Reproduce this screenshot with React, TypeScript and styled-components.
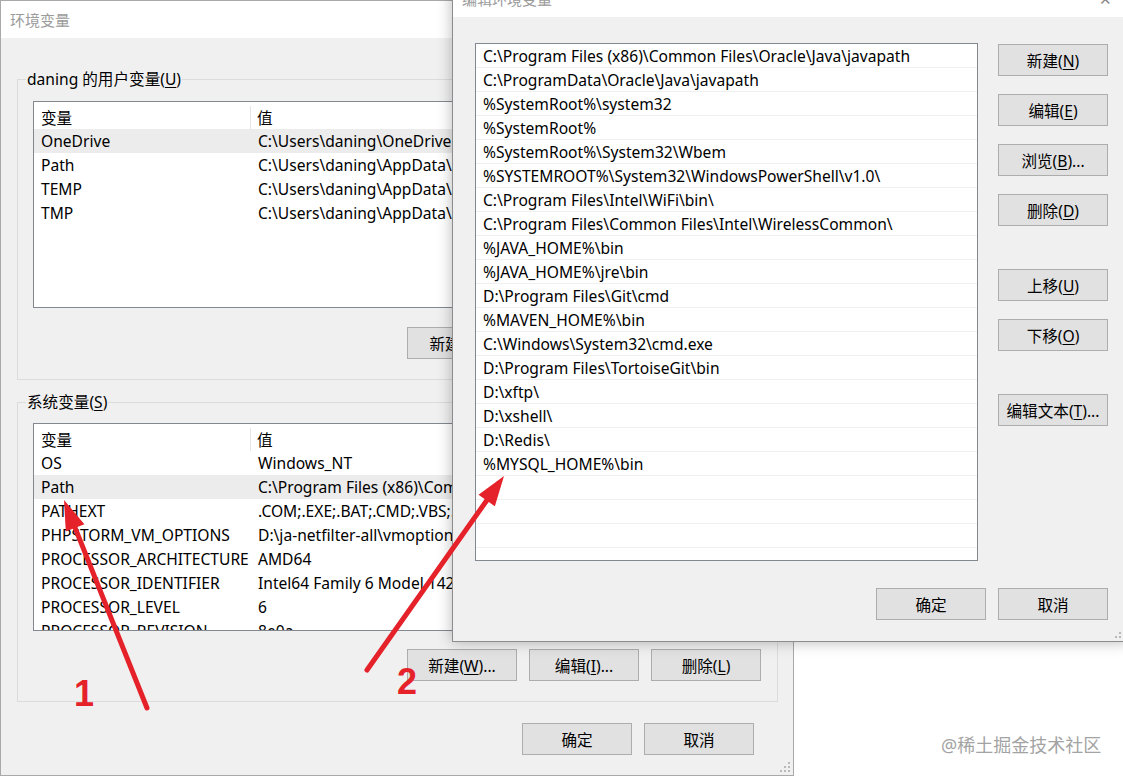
import React from 'react';
import styled, { createGlobalStyle } from 'styled-components';

const GlobalStyle = createGlobalStyle`
    html, body {
        margin: 0;
        padding: 0;
        background: #ffffff;
    }
    body {
        font-family: "Noto Sans", "Noto Sans CJK SC", sans-serif;
        font-size: 15.6px;
        color: #000000;
    }
    u {
        text-underline-offset: 2px;
    }
`;

const Desktop = styled.div`
    position: relative;
    width: 1123px;
    height: 777px;
    overflow: hidden;
    background: #ffffff;
`;

type WindowProps = {
    readonly $left: number;
    readonly $top: number;
    readonly $width: number;
    readonly $height: number;
    readonly $raised?: boolean;
};

const Window = styled.div<WindowProps>`
    position: absolute;
    left: ${({ $left }) => $left}px;
    top: ${({ $top }) => $top}px;
    width: ${({ $width }) => $width}px;
    height: ${({ $height }) => $height}px;
    box-sizing: border-box;
    border: 1px solid ${({ $raised }) => ($raised ? '#8c8c8c' : '#a9a9a9')};
    background: #f0f0f0;
    display: flex;
    flex-direction: column;
    box-shadow: ${({ $raised }) => ($raised ? '0 0 14px rgba(0, 0, 0, 0.28)' : 'none')};
    z-index: ${({ $raised }) => ($raised ? 2 : 1)};
`;

const TitleBar = styled.div`
    flex: none;
    height: 37px;
    background: #ffffff;
    display: flex;
    align-items: center;
    justify-content: space-between;
    padding-left: 9px;
    color: #9b9b9b;
    font-size: 15px;
`;

const CloseGlyph = styled.span`
    width: 46px;
    text-align: center;
    color: #8a8a8a;
    font-size: 15px;
`;

const EnvBody = styled.div`
    flex: 1;
    display: flex;
    flex-direction: column;
    padding: 41px 15px 0 16px;
`;

type GroupProps = { readonly $gap?: number; readonly $padTop: number };

const GroupBox = styled.section<GroupProps>`
    position: relative;
    margin-top: ${({ $gap }) => $gap ?? 0}px;
    border: 1px solid #dcdcdc;
    padding: ${({ $padTop }) => $padTop}px 15px 20px 15px;
`;

const GroupTitle = styled.span`
    position: absolute;
    top: -12px;
    left: 8px;
    padding: 0 1px;
    background: #f0f0f0;
    line-height: 22px;
    white-space: nowrap;
`;

const ListView = styled.div<{ $height: number }>`
    height: ${({ $height }) => $height}px;
    box-sizing: border-box;
    border: 1px solid #828790;
    background: #ffffff;
    overflow: hidden;
`;

const ListHeader = styled.div`
    display: grid;
    grid-template-columns: 217px 1fr;
    height: 27px;
    box-sizing: border-box;
    padding-top: 4px;
`;

const HeaderCell = styled.div<{ $divider?: boolean }>`
    display: flex;
    align-items: center;
    padding-left: ${({ $divider }) => ($divider ? 7 : 6)}px;
    border-right: ${({ $divider }) => ($divider ? '1px solid #e5e5e5' : 'none')};
    white-space: nowrap;
`;

const ListRow = styled.div<{ $selected?: boolean }>`
    display: grid;
    grid-template-columns: 217px 1fr;
    height: 24px;
    align-items: center;
    background: ${({ $selected }) => ($selected ? '#ececec' : 'transparent')};
    white-space: nowrap;
`;

const Cell = styled.span`
    padding-left: 7px;
    overflow: hidden;
`;

const ButtonRow = styled.div<{ $top: number; $right?: number }>`
    display: flex;
    justify-content: flex-end;
    gap: 12px;
    margin-top: ${({ $top }) => $top}px;
    margin-right: ${({ $right }) => $right ?? 0}px;
`;

const Button = styled.button<{ $gapBefore?: number }>`
    width: 110px;
    height: 32px;
    flex: none;
    box-sizing: border-box;
    margin: ${({ $gapBefore }) => $gapBefore ?? 0}px 0 0 0;
    padding: 0;
    border: 1px solid #adadad;
    background: #e1e1e1;
    font-family: inherit;
    font-size: 15.6px;
    color: #000000;
    white-space: nowrap;
`;

const EditBody = styled.div`
    flex: 1;
    display: flex;
    flex-direction: column;
    padding: 26px 20px 0 22px;
`;

const EditMain = styled.div`
    display: flex;
    gap: 20px;
`;

const PathList = styled.div`
    width: 503px;
    height: 518px;
    box-sizing: border-box;
    border: 1px solid #828790;
    background: #ffffff;
    overflow: hidden;
`;

const PathRow = styled.div`
    height: 24px;
    box-sizing: border-box;
    border-bottom: 1px solid #efefef;
    padding-left: 7px;
    display: flex;
    align-items: center;
    white-space: nowrap;
`;

const ButtonColumn = styled.div`
    display: flex;
    flex-direction: column;
    padding-top: 1px;
    gap: 18px;
`;

const Grip = styled.svg`
    position: absolute;
    right: 2px;
    bottom: 2px;
`;

const Annotations = styled.svg`
    position: absolute;
    left: 0;
    top: 0;
    z-index: 5;
    pointer-events: none;
`;

const Watermark = styled.div`
    position: absolute;
    left: 941px;
    top: 731px;
    z-index: 6;
    font-size: 18px;
    color: #a3a3a3;
    text-shadow: 0 0 1px #ffffff;
`;

const userVars = [
    { name: 'OneDrive', value: 'C:\\Users\\daning\\OneDrive', selected: true },
    { name: 'Path', value: 'C:\\Users\\daning\\AppData\\Local\\Microsoft\\WindowsApps;' },
    { name: 'TEMP', value: 'C:\\Users\\daning\\AppData\\Local\\Temp' },
    { name: 'TMP', value: 'C:\\Users\\daning\\AppData\\Local\\Temp' },
];

const systemVars = [
    { name: 'OS', value: 'Windows_NT' },
    { name: 'Path', value: 'C:\\Program Files (x86)\\Common Files\\Oracle\\Java\\javapath;', selected: true },
    { name: 'PATHEXT', value: '.COM;.EXE;.BAT;.CMD;.VBS;.VBE;.JS;.JSE;.WSF;.WSH;.MSC' },
    { name: 'PHPSTORM_VM_OPTIONS', value: 'D:\\ja-netfilter-all\\vmoptions\\phpstorm.vmoptions' },
    { name: 'PROCESSOR_ARCHITECTURE', value: 'AMD64' },
    { name: 'PROCESSOR_IDENTIFIER', value: 'Intel64 Family 6 Model 142 Stepping 10, GenuineIntel' },
    { name: 'PROCESSOR_LEVEL', value: '6' },
    { name: 'PROCESSOR_REVISION', value: '8e0a' },
];

const paths = [
    'C:\\Program Files (x86)\\Common Files\\Oracle\\Java\\javapath',
    'C:\\ProgramData\\Oracle\\Java\\javapath',
    '%SystemRoot%\\system32',
    '%SystemRoot%',
    '%SystemRoot%\\System32\\Wbem',
    '%SYSTEMROOT%\\System32\\WindowsPowerShell\\v1.0\\',
    'C:\\Program Files\\Intel\\WiFi\\bin\\',
    'C:\\Program Files\\Common Files\\Intel\\WirelessCommon\\',
    '%JAVA_HOME%\\bin',
    '%JAVA_HOME%\\jre\\bin',
    'D:\\Program Files\\Git\\cmd',
    '%MAVEN_HOME%\\bin',
    'C:\\Windows\\System32\\cmd.exe',
    'D:\\Program Files\\TortoiseGit\\bin',
    'D:\\xftp\\',
    'D:\\xshell\\',
    'D:\\Redis\\',
    '%MYSQL_HOME%\\bin',
    '',
    '',
    '',
    '',
];

type Var = { name: string; value: string; selected?: boolean };

const VarList = ({ vars, height }: { vars: Var[]; height: number }) => (
    <ListView $height={height}>
        <ListHeader>
            <HeaderCell $divider>变量</HeaderCell>
            <HeaderCell>值</HeaderCell>
        </ListHeader>
        {vars.map(v => (
            <ListRow key={v.name} $selected={v.selected}>
                <Cell>{v.name}</Cell>
                <Cell>{v.value}</Cell>
            </ListRow>
        ))}
    </ListView>
);

const ResizeGrip = () => (
    <Grip width="12" height="12" viewBox="0 0 12 12">
        {[[9, 1], [5, 5], [9, 5], [1, 9], [5, 9], [9, 9]].map(([x, y]) => (
            <rect key={`${x}-${y}`} x={x} y={y} width="2" height="2" fill="#b9b9b9" />
        ))}
    </Grip>
);

const Arrow = ({ tail, tip }: { tail: [number, number]; tip: [number, number] }) => {
    const dx = tip[0] - tail[0];
    const dy = tip[1] - tail[1];
    const len = Math.hypot(dx, dy);
    const ux = dx / len;
    const uy = dy / len;
    const bx = tip[0] - ux * 30;
    const by = tip[1] - uy * 30;
    const px = -uy;
    const py = ux;
    const head = `${tip[0]},${tip[1]} ${bx + px * 10},${by + py * 10} ${bx - px * 10},${by - py * 10}`;
    return (
        <g>
            <line x1={tail[0]} y1={tail[1]} x2={bx + ux * 4} y2={by + uy * 4} stroke="#e5222a" strokeWidth="5" strokeLinecap="round" />
            <polygon points={head} fill="#e5222a" />
        </g>
    );
};

export default function App() {
    return (
        <Desktop>
            <GlobalStyle />

            <Window $left={0} $top={0} $width={794} $height={776}>
                <TitleBar>环境变量</TitleBar>
                <EnvBody>
                    <GroupBox $padTop={21}>
                        <GroupTitle>daning 的用户变量(<u>U</u>)</GroupTitle>
                        <VarList vars={userVars} height={207} />
                        <ButtonRow $top={19} $right={1}>
                            <Button>新建(<u>N</u>)...</Button>
                            <Button>编辑(<u>E</u>)...</Button>
                            <Button>删除(<u>D</u>)</Button>
                        </ButtonRow>
                    </GroupBox>
                    <GroupBox $gap={22} $padTop={20}>
                        <GroupTitle>系统变量(<u>S</u>)</GroupTitle>
                        <VarList vars={systemVars} height={208} />
                        <ButtonRow $top={18} $right={1}>
                            <Button>新建(<u>W</u>)...</Button>
                            <Button>编辑(<u>I</u>)...</Button>
                            <Button>删除(<u>L</u>)</Button>
                        </ButtonRow>
                    </GroupBox>
                    <ButtonRow $top={21} $right={24}>
                        <Button>确定</Button>
                        <Button>取消</Button>
                    </ButtonRow>
                </EnvBody>
                <ResizeGrip />
            </Window>

            <Window $left={452} $top={-21} $width={677} $height={663} $raised>
                <TitleBar>
                    <span>编辑环境变量</span>
                    <CloseGlyph>✕</CloseGlyph>
                </TitleBar>
                <EditBody>
                    <EditMain>
                        <PathList>
                            {paths.map((p, i) => (
                                <PathRow key={i}>{p}</PathRow>
                            ))}
                        </PathList>
                        <ButtonColumn>
                            <Button>新建(<u>N</u>)</Button>
                            <Button>编辑(<u>E</u>)</Button>
                            <Button>浏览(<u>B</u>)...</Button>
                            <Button>删除(<u>D</u>)</Button>
                            <Button $gapBefore={25}>上移(<u>U</u>)</Button>
                            <Button>下移(<u>O</u>)</Button>
                            <Button $gapBefore={25}>编辑文本(<u>T</u>)...</Button>
                        </ButtonColumn>
                    </EditMain>
                    <ButtonRow $top={27} $right={0}>
                        <Button>确定</Button>
                        <Button>取消</Button>
                    </ButtonRow>
                </EditBody>
                <ResizeGrip />
            </Window>

            <Annotations width="1123" height="777" viewBox="0 0 1123 777">
                <Arrow tail={[147, 708]} tip={[64, 500]} />
                <Arrow tail={[367, 670]} tip={[504, 476]} />
                <text x="74" y="706" fill="#e5222a" fontFamily="'Liberation Sans', Arial, sans-serif" fontWeight="bold" fontSize="36">1</text>
                <text x="397" y="694" fill="#e5222a" fontFamily="'Liberation Sans', Arial, sans-serif" fontWeight="bold" fontSize="36">2</text>
            </Annotations>

            <Watermark>@稀土掘金技术社区</Watermark>
        </Desktop>
    );
}
